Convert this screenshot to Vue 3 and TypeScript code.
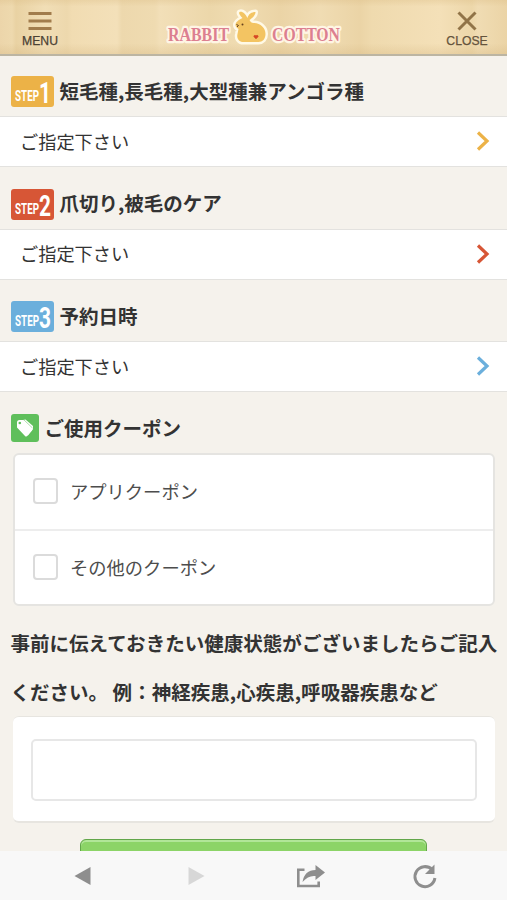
<script setup lang="ts">
interface Step {
  no: number
  title: string
  color: string
}

const steps: Step[] = [
  { no: 1, title: '短毛種,長毛種,大型種兼アンゴラ種', color: '#ecb247' },
  { no: 2, title: '爪切り,被毛のケア', color: '#d75636' },
  { no: 3, title: '予約日時', color: '#6bafdc' },
]

const coupons: string[] = ['アプリクーポン', 'その他のクーポン']

const rabbit =
  'M81 11c-3-3-4-5-3-6 3-1 6 2 8 6 1-4 4-6 8-6 0 3-3 6-6 8 1 2 2 3 4 3 7 0 12 5 12 11 0 5-3 8-7 8H82c-5 0-7-4-6-8l1-5c-2-1-3-3-3-4 0-3 3-5 7-7z'
</script>

<template>
  <div class="screen">
    <header class="header">
      <button class="nav-button menu" type="button">
        <svg width="24" height="20" viewBox="0 0 24 20">
          <path d="M.5 2.500h23M.5 10h23M.5 17.500h23" stroke="#a17c4c" stroke-width="2.800" />
        </svg>
        <span>MENU</span>
      </button>
      <svg class="logo" width="184" height="46" viewBox="0 0 184 46">
        <g class="logo-text">
          <text x="6" y="36.500" textLength="61" lengthAdjust="spacingAndGlyphs">RABBIT</text>
          <text x="110" y="36.500" textLength="68" lengthAdjust="spacingAndGlyphs">COTTON</text>
        </g>
        <g transform="translate(-.5 3)">
          <path :d="rabbit" fill="#fff9e6" stroke="#fff9e6" stroke-width="5" stroke-linejoin="round" />
          <path :d="rabbit" fill="#f3c462" />
          <circle cx="81" cy="17.500" r="1" fill="#65401e" />
          <path d="M75 17.500l2 1-1.500 1.500" stroke="#65401e" fill="none" stroke-width="1" />
          <path d="M94.500 31.500c-4-2.500-1-4 0-2.500 1-1.500 4 0 0 2.500z" fill="#d64725" stroke="#d64725" />
        </g>
      </svg>
      <button class="nav-button close" type="button">
        <svg width="20" height="20" viewBox="0 0 20 20">
          <path d="M1.500 1.500l17 17M18.500 1.500l-17 17" stroke="#917448" stroke-width="3" />
        </svg>
        <span>CLOSE</span>
      </button>
    </header>

    <main class="content">
      <section v-for="step in steps" :key="step.no" class="step">
        <h2 class="heading">
          <svg class="badge" width="43" height="31" viewBox="0 0 43 31">
            <rect width="43" height="31" rx="3" :fill="step.color" />
            <text x="4" y="25" font-size="15" textLength="24" lengthAdjust="spacingAndGlyphs">STEP</text>
            <text x="28" y="26.500" font-size="30" textLength="12" lengthAdjust="spacingAndGlyphs">{{ step.no }}</text>
          </svg>
          <span>{{ step.title }}</span>
        </h2>
        <div class="choice">
          <span>ご指定下さい</span>
          <svg width="14" height="20" viewBox="0 0 14 20">
            <path d="M2 1.500L11 10l-9 8.500" fill="none" :stroke="step.color" stroke-width="3.200" />
          </svg>
        </div>
      </section>

      <section>
        <h2 class="heading coupon-heading">
          <svg width="28" height="28" viewBox="0 0 28 28">
            <rect width="28" height="28" rx="3" fill="#5fbf5b" />
            <path d="M12 6l2.500-.5 7.500 6.500v3l-5.500 7" fill="#fff" />
            <path d="M6 8.500Q6 6 8.500 6H12l9 8.500q1 1 0 2L16 22q-1 1-2 0L6 13.500z" fill="#fff" />
            <circle cx="8.800" cy="9" r="1.300" fill="#5fbf5b" />
            <path d="M13 6l8.500 8" stroke="#5fbf5b" stroke-width=".5" />
          </svg>
          <span>ご使用クーポン</span>
        </h2>
        <div class="coupons">
          <label v-for="coupon in coupons" :key="coupon" class="coupon">
            <input type="checkbox" />
            <span>{{ coupon }}</span>
          </label>
        </div>
      </section>

      <section>
        <p class="note">事前に伝えておきたい健康状態がございましたらご記入<br />ください。 例：神経疾患,心疾患,呼吸器疾患など</p>
        <div class="memo"><textarea></textarea></div>
      </section>
      <button class="submit" type="button"></button>
    </main>

    <nav class="toolbar">
      <svg width="114" height="48" viewBox="0 0 114 48">
        <path d="M74.500 25L90.500 16v18z" fill="#8e8e8e" />
      </svg>
      <svg width="114" height="48" viewBox="0 0 114 48">
        <path d="M74.500 16v18l16-9z" fill="#d7d7d7" />
      </svg>
      <svg width="114" height="48" viewBox="0 0 114 48">
        <path d="M76.500 18.700H70.300V35H90.700v-4.500" fill="none" stroke="#8e8e8e" stroke-width="2.600" />
        <path d="M74.500 31q2-12 13-12v-5l9.500 7.500-9.500 7.500v-4q-7-1-13 6z" fill="#8e8e8e" />
      </svg>
      <svg width="114" height="48" viewBox="0 0 114 48">
        <path d="M90 18.500A10 10 0 1 0 92.900 27" fill="none" stroke="#8e8e8e" stroke-width="3" />
        <path d="M92.500 13.500v9.500h-9.500z" fill="#8e8e8e" />
      </svg>
    </nav>
  </div>
</template>

<style>
body {
  margin: 0;
  overflow: hidden;
}
</style>

<style scoped>
* {
  box-sizing: border-box;
}
.screen {
  display: flex;
  flex-direction: column;
  width: 507px;
  height: 900px;
  overflow: hidden;
  background: #f5f2ec;
  color: #333;
  font-family: 'Noto Sans CJK JP', sans-serif;
}
.header {
  display: flex;
  flex: none;
  justify-content: space-between;
  height: 56px;
  padding: 5px 16px 0;
  border-bottom: 2px solid #bcb5a2;
  background:
    linear-gradient(rgba(220, 190, 135, 0.35), transparent 12%, transparent 80%, rgba(205, 172, 115, 0.25)),
    linear-gradient(90deg, #ecd5aa 0, #eed9ae 12px, #e9d2a3 16px, #f1deb6 45px, #edd8ad 67px, #f1dcb2 72px, #f3e0b9 117px, #edd8ad 122px, #efdbb1 155px, #f2dfb8 160px, #ecd7aa 210px, #f0dcb2 240px, #ebd4a6 280px, #f0dcb3 320px, #ebd4a6 360px, #efdaae 372px, #f4e0b8 440px, #edd7aa 472px, #f0dcb3 478px, #ebd4a6 507px);
}
.nav-button {
  display: flex;
  flex-direction: column;
  align-items: center;
  width: 48px;
  padding: 6px 0 0;
  border: 0;
  background: none;
  color: #64533c;
  font: 12.200px/15px 'Liberation Sans', sans-serif;
  -webkit-text-stroke: 0.25px currentColor;
}
.menu {
  color: #4b4234;
}
.nav-button span {
  margin-top: 3px;
}
.logo {
  flex: none;
  margin-top: -1px;
  overflow: visible;
}
.logo-text {
  font: 700 19.500px 'Liberation Serif', serif;
  fill: #dc7f90;
  stroke: #fff5e4;
  stroke-width: 4.500px;
  stroke-linejoin: round;
  paint-order: stroke;
}
.content {
  flex: 1;
  min-height: 0;
  overflow: hidden;
}
.step {
  height: 112.500px;
}
.heading {
  display: flex;
  align-items: center;
  gap: 6px;
  height: 60px;
  margin: 0;
  padding: 11px 0 0 10.500px;
  font-size: 19.500px;
  font-weight: 700;
  line-height: 30px;
}
.step .heading span,
.choice span {
  padding-bottom: 2px;
}
.badge {
  fill: #fff;
  font-family: Roboto, sans-serif;
  font-weight: 700;
}
.choice {
  display: flex;
  align-items: center;
  justify-content: space-between;
  height: 51px;
  padding: 0 17px 0 20px;
  border: solid #e3e2df;
  border-width: 1.500px 0;
  background: #fff;
  font-size: 18.200px;
}
.choice svg {
  margin-bottom: 1px;
}
.coupon-heading {
  height: 59px;
  padding-top: 9px;
}
.coupons {
  height: 153px;
  margin: 0 12px 0 13px;
  border: 2px solid #e5e4e1;
  border-radius: 6px;
  background: #fff;
}
.coupon {
  display: flex;
  align-items: center;
  gap: 12px;
  height: 74px;
  padding: 0 0 2px 18px;
  color: #4d4d4d;
  font-size: 18.300px;
}
.coupon + .coupon {
  height: 76px;
  border-top: 2px solid #ededed;
}
.coupon input {
  appearance: none;
  width: 25px;
  height: 26px;
  margin: 0;
  border: 2px solid #dbdbdb;
  border-radius: 4px;
  background: #fff;
}
.note {
  margin: 12px 0 0 10.500px;
  font-size: 19.500px;
  font-weight: 700;
  line-height: 49px;
  letter-spacing: 0.03px;
  white-space: nowrap;
}
.memo {
  height: 107px;
  margin: 0 12px 0 13px;
  padding: 22px 18px;
  border: solid #e7e5e0;
  border-width: 1px 0 2px;
  border-radius: 6px;
  background: #fff;
}
.memo textarea {
  display: block;
  width: 100%;
  height: 62px;
  border: 2px solid #e7e7e7;
  border-radius: 5px;
  resize: none;
}
.submit {
  display: block;
  width: 347px;
  height: 50px;
  margin: 16px 0 0 80px;
  border: 1.500px solid #62a64a;
  border-radius: 6px;
  background: #8cd467;
  box-shadow: inset 0 2px 0 #b1e698;
}
.toolbar {
  display: flex;
  flex: none;
  height: 49px;
  background: #f8f8f8;
}
</style>
